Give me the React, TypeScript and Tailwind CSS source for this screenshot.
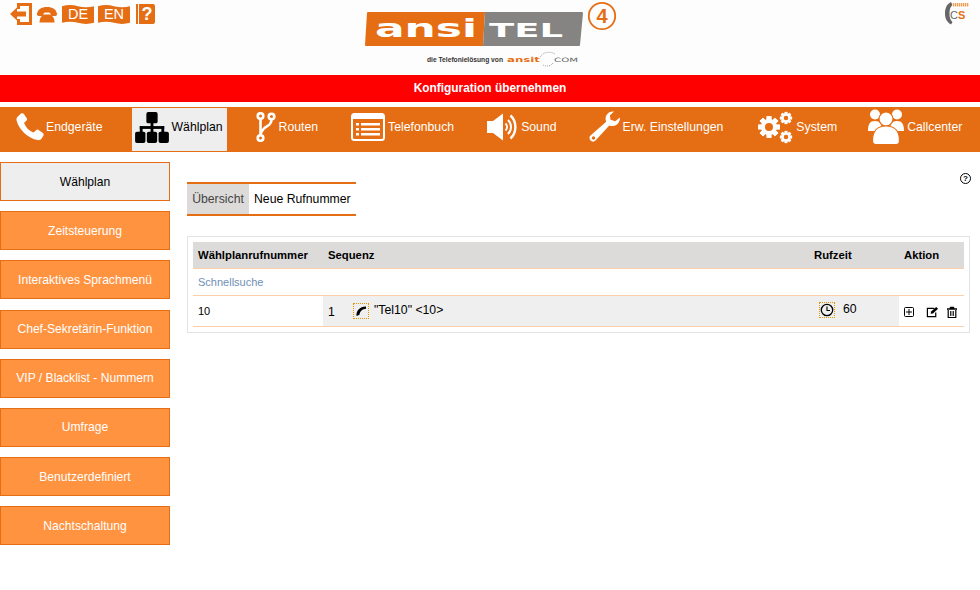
import { type JSX } from "react";

const sideItems = [
    "Zeitsteuerung",
    "Interaktives Sprachmenü",
    "Chef-Sekretärin-Funktion",
    "VIP / Blacklist - Nummern",
    "Umfrage",
    "Benutzerdefiniert",
    "Nachtschaltung",
];

function Gear({ cx, cy, r, fill }: { cx: number; cy: number; r: number; fill: string }): JSX.Element {
    const teeth = [0, 45, 90, 135, 180, 225, 270, 315];
    return (
        <g>
            {teeth.map((a) => (
                <rect
                    key={a}
                    x={cx - r * 0.3}
                    y={cy - r * 1.35}
                    width={r * 0.6}
                    height={r * 2.7}
                    fill="#fff"
                    transform={`rotate(${a} ${cx} ${cy})`}
                />
            ))}
            <circle cx={cx} cy={cy} r={r} fill="#fff" />
            <circle cx={cx} cy={cy} r={r * 0.5} fill={fill} />
        </g>
    );
}

function PhoneIcon(): JSX.Element {
    return (
        <svg width="28" height="28" viewBox="0 0 28 28" className="shrink-0">
            <path
                d="M5 0.5c1-.6 2.2-.5 2.9.5l2.8 4.2c.6.9.4 1.8-.3 2.5L8.6 9.3c-.4.4-.4.9-.2 1.4 1.8 4 4.6 6.9 8.4 8.6.5.2 1 .1 1.4-.3l1.9-1.8c.7-.7 1.7-.8 2.5-.2l4.2 3.1c.9.7 1.1 1.8.5 2.7l-1.7 2.6c-.8 1.2-2.2 1.9-3.7 1.7C11.8 25.4 2.6 16.300 .6 7.500.2 5.800 .8 4.300 2.100 3.200z"
                fill="#fff"
            />
        </svg>
    );
}

function PlanIcon(): JSX.Element {
    return (
        <svg width="34" height="31" viewBox="0 0 36 33" className="shrink-0">
            <rect x="12" y="0" width="12" height="12" rx="2" fill="#000" />
            <rect x="16.500" y="10" width="3" height="8" fill="#000" />
            <rect x="5" y="15" width="26" height="3" fill="#000" />
            <rect x="5" y="15" width="3" height="8" fill="#000" />
            <rect x="28" y="15" width="3" height="8" fill="#000" />
            <rect x="16.500" y="15" width="3" height="8" fill="#000" />
            <rect x="0" y="21" width="11" height="12" rx="2" fill="#000" />
            <rect x="12.500" y="21" width="11" height="12" rx="2" fill="#000" />
            <rect x="25" y="21" width="11" height="12" rx="2" fill="#000" />
        </svg>
    );
}

function RouteIcon(): JSX.Element {
    return (
        <svg width="20" height="30" viewBox="0 0 20 30" className="shrink-0">
            <g fill="none" stroke="#fff" strokeWidth="2.600">
                <path d="M4.500 6v18M15.500 7c0 7-5 6.500-8 10-2 2.200-3 3.500-3 7" />
                <circle cx="4.500" cy="4" r="2.800" />
                <circle cx="15.500" cy="4.500" r="2.800" />
                <circle cx="4.500" cy="26" r="2.800" />
            </g>
        </svg>
    );
}

function BookIcon(): JSX.Element {
    return (
        <svg width="34" height="28" viewBox="0 0 34 28" className="shrink-0">
            <rect x="1" y="1" width="32" height="26" rx="2.500" fill="none" stroke="#fff" strokeWidth="2" />
            <rect x="1" y="1" width="32" height="5" fill="#fff" />
            <g fill="#fff">
                <rect x="5" y="10" width="3" height="2.500" />
                <rect x="5" y="15" width="3" height="2.500" />
                <rect x="5" y="20" width="3" height="2.500" />
                <rect x="10" y="10" width="19" height="2.500" />
                <rect x="10" y="15" width="19" height="2.500" />
                <rect x="10" y="20" width="19" height="2.500" />
            </g>
        </svg>
    );
}

function SoundIcon(): JSX.Element {
    return (
        <svg width="31" height="28" viewBox="0 0 31 28" className="shrink-0">
            <path d="M0 8h6l10-7.500v27L6 20H0z" fill="#fff" />
            <g fill="none" stroke="#fff" strokeWidth="2">
                <path d="M18.500 10.500c2 2 2 5 0 7" />
                <path d="M21 7c4 4 4 10 0 14" />
                <path d="M23.500 2.500c6.500 6 6.500 17 0 23" strokeWidth="2.400" />
            </g>
        </svg>
    );
}

function WrenchIcon(): JSX.Element {
    return (
        <svg width="32" height="32" viewBox="0 0 32 32" className="shrink-0">
            <path
                d="M25 0.500c-4.500-.6-8 2.500-8.400 6.500-.1 1.300.1 2.500.6 3.700L1.500 24.500c-1.500 1.400-1.300 3.500 0 5 1.500 1.500 3.700 1.500 5 0l13.800-15c1.300.5 2.500.7 3.800.5 4-.5 7.300-4.200 6.800-8.600l-4.700 3.900-4.700-1.500-.6-4.300z"
                fill="#fff"
            />
            <circle cx="4.500" cy="27" r="1.700" fill="#e56e14" />
        </svg>
    );
}

function SystemIcon(): JSX.Element {
    return (
        <svg width="38" height="34" viewBox="0 0 38 34" className="shrink-0">
            <Gear cx={11} cy={17} r={8} fill="#e56e14" />
            <Gear cx={28} cy={8} r={4.500} fill="#e56e14" />
            <Gear cx={28} cy={27} r={4.500} fill="#e56e14" />
        </svg>
    );
}

function PeopleIcon(): JSX.Element {
    return (
        <svg width="36" height="36" viewBox="0 0 36 36" className="shrink-0">
            <circle cx="7" cy="5.500" r="5" fill="#fff" />
            <circle cx="29" cy="5.500" r="5" fill="#fff" />
            <path d="M0 22c0-7 2-10 7-10s7 3 7 10zM22 22c0-7 2-10 7-10s7 3 7 10z" fill="#fff" />
            <circle cx="18" cy="10" r="7" fill="#fff" stroke="#e56e14" strokeWidth="1.200" />
            <path
                d="M4.500 32c0-10 4-15 13.500-15s13.500 5 13.500 15c0 2-1.500 3.500-3.500 3.500H8c-2 0-3.500-1.500-3.500-3.500z"
                fill="#fff"
                stroke="#e56e14"
                strokeWidth="1.200"
            />
        </svg>
    );
}

function Flag({ label, className }: { label: string; className: string }): JSX.Element {
    return (
        <div className={`relative mt-[2px] h-[19px] w-[32px] ${className}`}>
            <svg width="32" height="19" viewBox="0 0 32 19" className="absolute inset-0">
                <path d="M0 1.200c5-1.500 11-1.500 16 0s11 1.500 16 0v16.600c-5 1.500-11 1.500-16 0s-11-1.500-16 0z" fill="#e56e14" />
            </svg>
            <span className="absolute inset-0 flex items-center justify-center text-[14.5px] leading-none text-white">
                {label}
            </span>
        </div>
    );
}

function TopIcons(): JSX.Element {
    const orange = "#e56e14";
    return (
        <div className="flex items-start pl-[10px] pt-[3px]">
            <svg width="22" height="22" viewBox="0 0 22 22" className="shrink-0">
                <path d="M7 0h15v22H7v-6h3v3h9V3h-9v3H7z" fill={orange} />
                <path d="M0 11l7-6.500v4h9v5H7v4z" fill={orange} />
            </svg>
            <svg width="22" height="22" viewBox="0 0 22 22" className="ml-[4px] shrink-0">
                <path
                    d="M1 11C1.500 6.500 5.500 4 11 4s9.500 2.500 10 7c.2 1.300-.7 2-1.700 2h-3c-1 0-1.700-.6-1.800-1.500l-.2-1.600c-2-.5-4.600-.5-6.600 0l-.2 1.600c-.1.900-.8 1.500-1.800 1.500h-3C1.700 13 .8 12.300 1 11z"
                    fill={orange}
                />
                <path d="M8 11.500h6c3 1.500 4.500 4 4.500 8h-15c0-4 1.500-6.500 4.500-8z" fill={orange} />
            </svg>
            <Flag label="DE" className="ml-[4px]" />
            <Flag label="EN" className="ml-[4px]" />
            <div className="ml-[6px] mt-[1px] flex h-[20px] w-[19px] border-l-2 border-[#e56e14]">
                <div className="ml-[1px] flex flex-1 items-center justify-center rounded-r-[2px] bg-[#e56e14] text-[18px] font-bold leading-none text-white">
                    ?
                </div>
            </div>
        </div>
    );
}

function Logo(): JSX.Element {
    return (
        <svg width="255" height="70" viewBox="0 0 255 70" className="block">
            <path d="M4 13a1 1 0 0 1 1-1H122L120 46H3a1 1 0 0 1-1-1z" fill="#e56e14" />
            <path d="M122 12H219a1 1 0 0 1 1 1L217 45a1 1 0 0 1-1 1H120z" fill="#858482" />
            <text x="12" y="37" fontFamily="'DejaVu Sans', sans-serif" fontWeight="700" fontSize="25" fill="#fff" textLength="102" lengthAdjust="spacingAndGlyphs">
                ansi
            </text>
            <text x="126" y="37" fontFamily="'DejaVu Sans', sans-serif" fontWeight="700" fontSize="19" fill="#fff" textLength="74" lengthAdjust="spacingAndGlyphs">
                TEL
            </text>
            <circle cx="239" cy="16" r="13.200" fill="none" stroke="#e56e14" strokeWidth="1.800" />
            <text x="239" y="23" textAnchor="middle" fontFamily="'Liberation Sans', sans-serif" fontWeight="700" fontSize="20" fill="#e56e14">
                4
            </text>
            <text x="64" y="62" fontFamily="'Liberation Sans', sans-serif" fontWeight="700" fontSize="7" fill="#333" textLength="76" lengthAdjust="spacingAndGlyphs">
                die Telefonielösung von
            </text>
            <text x="144" y="62" fontFamily="'DejaVu Sans', sans-serif" fontWeight="700" fontSize="7" fill="#e56e14" textLength="33" lengthAdjust="spacingAndGlyphs">
                ansit
            </text>
            <text x="191" y="62" fontFamily="'DejaVu Sans', sans-serif" fontSize="6" fill="#666" textLength="24" lengthAdjust="spacingAndGlyphs">
                COM
            </text>
            <path d="M177 57c3-5 10-6 15-3M190 63c-2 3-6 4-10 2" fill="none" stroke="#888" strokeWidth="0.800" strokeDasharray="1 1" />
        </svg>
    );
}

function CsLogo(): JSX.Element {
    return (
        <svg width="24" height="24" viewBox="0 0 24 24" className="block">
            <path d="M6 1C1.500 3 0 8 0 12.500S1.500 21 6 23.500l1.500-2.500C5 19 4.500 16 4.500 12.500S5 6 7.500 4z" fill="#666" />
            <path d="M8 3.800h16" stroke="#f29a4d" strokeWidth="3.600" strokeDasharray="1.300 0.700" />
            <text x="5" y="17.500" fontFamily="'Liberation Sans', sans-serif" fontSize="11" fill="#666">
                C
            </text>
            <text x="13" y="17.500" fontFamily="'Liberation Sans', sans-serif" fontWeight="700" fontSize="11" fill="#e56e14">
                S
            </text>
        </svg>
    );
}

function TelIcon(): JSX.Element {
    return (
        <div className="mr-[5px] flex h-[16px] w-[16px] items-center justify-center border border-dotted border-[#e69500]">
            <svg width="12" height="12" viewBox="0 0 12 12">
                <path d="M11 1.500v2.200c-3.500.2-6 2.300-6.500 6L1.500 11C1 6 4.500 1.500 11 1.500z" fill="#000" />
            </svg>
        </div>
    );
}

function ClockIcon(): JSX.Element {
    return (
        <div className="mr-[8px] flex h-[16px] w-[16px] items-center justify-center border border-dotted border-[#e69500]">
            <svg width="14" height="14" viewBox="0 0 14 14">
                <circle cx="7" cy="7" r="5.700" fill="none" stroke="#000" strokeWidth="1.300" />
                <path d="M7 3.500V7.500H10" fill="none" stroke="#000" strokeWidth="1.100" />
            </svg>
        </div>
    );
}

function App(): JSX.Element {
    return (
        <div className="h-[590px] w-[980px] overflow-hidden bg-white font-['Liberation_Sans',Arial,sans-serif] text-[12.25px] text-black">
            <div className="flex h-[75px] justify-between bg-[#fdfdfd]">
                <div className="w-[363px]">
                    <TopIcons />
                </div>
                <div className="w-[255px]">
                    <Logo />
                </div>
                <div className="flex w-[362px] justify-end pr-[11px] pt-[1px]">
                    <CsLogo />
                </div>
            </div>

            <div className="flex h-[27px] items-center justify-center bg-[#ff0000] pt-[1px] text-[11.9px] font-bold text-white">
                Konfiguration übernehmen
            </div>

            <nav className="mt-[5px] flex h-[45px] items-center bg-[#e56e14] text-white">
                <div className="ml-[16px] flex h-full items-center gap-[2px] pb-[5px]">
                    <PhoneIcon />
                    <span className="mt-[1px]">Endgeräte</span>
                </div>
                <div className="ml-[29px] flex h-[43px] w-[95px] items-center gap-[3px] bg-[#eeeeee] pb-[5px] pl-[3px] text-black">
                    <PlanIcon />
                    <span>Wählplan</span>
                </div>
                <div className="ml-[29px] flex h-full items-center gap-[3px] pb-[5px]">
                    <RouteIcon />
                    <span className="mt-[1px]">Routen</span>
                </div>
                <div className="ml-[33px] flex h-full items-center gap-[3px] pb-[5px]">
                    <BookIcon />
                    <span className="mt-[1px]">Telefonbuch</span>
                </div>
                <div className="ml-[33px] flex h-full items-center gap-[3px] pb-[5px]">
                    <SoundIcon />
                    <span className="mt-[1px]">Sound</span>
                </div>
                <div className="ml-[32px] flex h-full items-center gap-[2px] pb-[5px]">
                    <WrenchIcon />
                    <span className="mt-[1px]">Erw. Einstellungen</span>
                </div>
                <div className="ml-[35px] flex h-full items-center gap-[0px] pb-[5px]">
                    <SystemIcon />
                    <span className="mt-[1px]">System</span>
                </div>
                <div className="ml-[31px] flex h-full items-center gap-[3px] pb-[5px]">
                    <PeopleIcon />
                    <span className="mt-[1px]">Callcenter</span>
                </div>
            </nav>

            <div className="flex pt-[10px]">
                <aside className="flex w-[170px] shrink-0 flex-col gap-[10.2px] text-[12.1px]">
                    <div className="flex h-[39px] items-center justify-center border border-[#e56e14] bg-[#eeeeee] pt-[1px]">
                        Wählplan
                    </div>
                    {sideItems.map((item) => (
                        <div
                            key={item}
                            className="flex h-[39px] items-center justify-center border border-[#e56e14] bg-[#ff9340] text-white"
                        >
                            {item}
                        </div>
                    ))}
                </aside>

                <main className="relative ml-[17px] w-[783px]">
                    <div className="absolute right-[-1px] top-[11px] flex h-[11px] w-[11px] items-center justify-center rounded-full border-[1.5px] border-black text-[8px] font-bold leading-none">
                        ?
                    </div>
                    <div className="mt-[20px] flex w-[169px] border-y-2 border-[#e56e14]">
                        <div className="flex h-[30px] w-[62px] items-center justify-center bg-[#dcdbda] text-[#444]">
                            Übersicht
                        </div>
                        <div className="flex h-[30px] items-center pl-[5px]">Neue Rufnummer</div>
                    </div>

                    <div className="mt-[20px] border border-[#e3e3e3] p-[5px]">
                        <div className="grid h-[27px] grid-cols-[130px_486px_90px_65px] items-center border-b border-[#fbcfa8] bg-[#dcdbda] text-[11.3px] font-bold">
                            <div className="pl-[5px]">Wählplanrufnummer</div>
                            <div className="pl-[5px]">Sequenz</div>
                            <div className="pl-[5px]">Rufzeit</div>
                            <div className="pl-[5px]">Aktion</div>
                        </div>
                        <div className="flex h-[27px] items-center border-b border-[#fbcfa8] pl-[5px] text-[11px] text-[#6f8fb5]">
                            Schnellsuche
                        </div>
                        <div className="grid h-[31px] grid-cols-[130px_486px_90px_65px] border-b border-[#fbcfa8] text-[11px]">
                            <div className="flex items-center pl-[5px]">10</div>
                            <div className="flex items-center bg-[#efefef] pl-[5px] text-[12.25px]">
                                <span className="mt-[2px] w-[25px]">1</span>
                                <TelIcon />
                                <span className="-mt-[2px]">"Tel10" &lt;10&gt;</span>
                            </div>
                            <div className="flex items-center bg-[#efefef] pl-[10px] text-[12.25px]">
                                <div className="-mt-[3px] flex items-center">
                                    <ClockIcon />
                                    <span>60</span>
                                </div>
                            </div>
                            <div className="flex items-center pl-[5px] pt-[1px]">
                                <svg width="10" height="10" viewBox="0 0 10 10">
                                    <rect x="0.500" y="0.500" width="9" height="9" rx="1" fill="none" stroke="#000" />
                                    <path d="M5 2v6M2 5h6" stroke="#000" />
                                </svg>
                                <svg width="13" height="12" viewBox="0 0 14 12" className="ml-[12px]">
                                    <path d="M9 2H1.500v9h9V6.500" fill="none" stroke="#000" strokeWidth="1.300" />
                                    <path d="M5 8l.500-2.500L11 0.500l2 2L7.500 7.500z" fill="#000" />
                                </svg>
                                <svg width="10" height="12" viewBox="0 0 10 12" className="ml-[8px]">
                                    <path d="M0 2.500h10v1H0zM3 2.500V1h4v1.500" fill="#000" stroke="#000" strokeWidth="0.500" />
                                    <path d="M1.200 4v7.500h7.600V4" fill="none" stroke="#000" strokeWidth="1.200" />
                                    <path d="M3.500 5v5M5 5v5M6.500 5v5" stroke="#000" strokeWidth="0.800" />
                                </svg>
                            </div>
                        </div>
                    </div>
                </main>
            </div>
        </div>
    );
}

export default App;
